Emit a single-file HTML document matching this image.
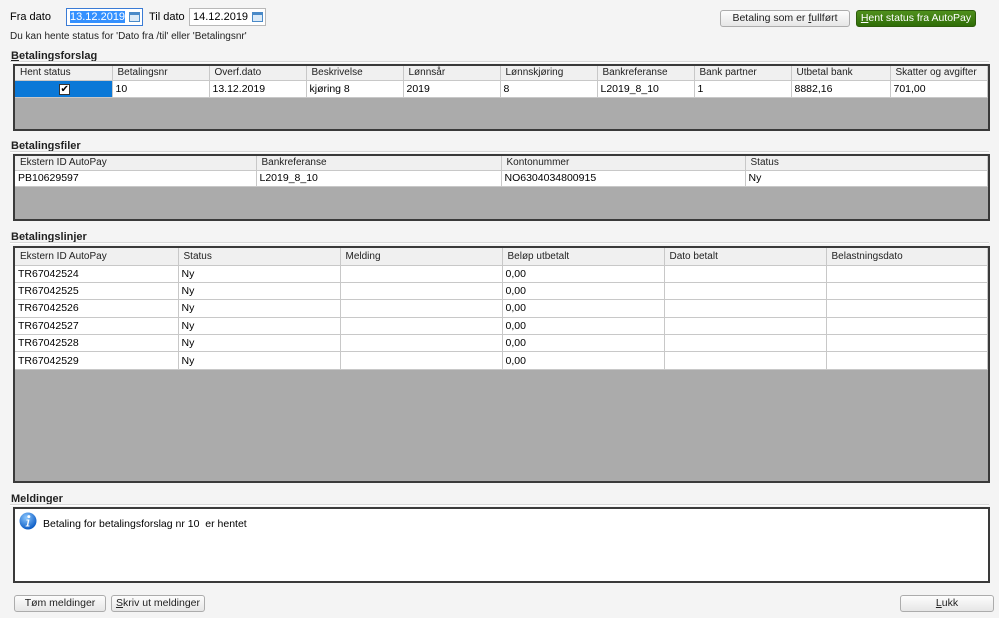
<!DOCTYPE html>
<html><head><meta charset="utf-8"><style>
*{box-sizing:border-box;margin:0;padding:0}
body{width:999px;height:618px;background:#f4f4f4;font-family:"Liberation Sans",Tahoma,sans-serif;font-size:11px;color:#000;position:relative;overflow:hidden}
.a{position:absolute;white-space:nowrap}
.lbl{font-weight:bold;font-size:11px;color:#222}
.sep{position:absolute;left:10px;right:10px;height:2px;border-top:1px solid #d8d8d8;border-bottom:1px solid #fff}
.box{position:absolute;left:13px;width:977px;border:2px solid #3a3a3a;background:#ababab;overflow:hidden}
table{border-collapse:collapse;table-layout:fixed;width:100%;background:#fff}
th{background:#f0f0f0;font-weight:normal;text-align:left;padding:0 0 0 5px;border-right:1px solid #c8c8c8;border-bottom:1px solid #c8c8c8;height:14px;font-size:10px;color:#222;overflow:hidden}
td{padding:0 0 0 3px;border-right:1px solid #c8c8c8;border-bottom:1px solid #c8c8c8;overflow:hidden;font-size:10.5px}
.btn{position:absolute;height:17px;border:1px solid #acacac;border-radius:3px;background:linear-gradient(#fdfdfd,#e6e6e6);text-align:center;line-height:15px;font-size:10.5px;color:#222;white-space:nowrap}
.inp{position:absolute;height:18px;border:1px solid #b8b8b8;background:#fff;font-size:11px;line-height:16px;padding-left:3px}
.cal{position:absolute;right:2px;top:3px;width:11px;height:10px;border:1px solid #4a8ac8;background:#dbeaf7}
.cal:before{content:"";position:absolute;left:0;right:0;top:0;height:2px;background:#4a8ac8}
</style></head><body>
<div class="a" style="left:10px;top:11px">Fra dato</div>
<div class="inp" style="left:66px;top:8px;width:77px;border-color:#3a7bd5"><span style="background:#3390ff;color:#fff">13.12.2019</span><div class="cal"></div></div>
<div class="a" style="left:149px;top:11px">Til dato</div>
<div class="inp" style="left:189px;top:8px;width:77px">14.12.2019<div class="cal"></div></div>
<div class="a" style="left:10px;top:31px;font-size:10px;color:#222">Du kan hente status for 'Dato fra /til' eller 'Betalingsnr'</div>
<div class="btn" style="left:720px;top:10px;width:130px">Betaling som er <u>f</u>ullført</div>
<div class="btn" style="left:856px;top:10px;width:120px;background:linear-gradient(#4f8f1d,#2f6d07);border-color:#2d5c0b;color:#fff"><u>H</u>ent status fra AutoPay</div>

<div class="a lbl" style="left:11px;top:50px"><u>B</u>etalingsforslag</div>
<div class="sep" style="top:61px"></div>
<div class="box" style="top:64px;height:67px">
<table><colgroup><col style="width:97px"><col style="width:97px"><col style="width:97px"><col style="width:97px"><col style="width:97px"><col style="width:97px"><col style="width:97px"><col style="width:97px"><col style="width:99px"><col></colgroup>
<tr><th>Hent status</th><th>Betalingsnr</th><th>Overf.dato</th><th>Beskrivelse</th><th>Lønnsår</th><th>Lønnskjøring</th><th>Bankreferanse</th><th>Bank partner</th><th>Utbetal bank</th><th>Skatter og avgifter</th></tr>
<tr style="height:17px"><td style="background:#0a78d7;text-align:center"><span style="display:inline-block;width:11px;height:11px;background:#fff;border:1px solid #333;font-size:10px;line-height:9px">✔</span></td><td>10</td><td>13.12.2019</td><td>kjøring 8</td><td>2019</td><td>8</td><td>L2019_8_10</td><td>1</td><td>8882,16</td><td>701,00</td></tr>
</table></div>

<div class="a lbl" style="left:11px;top:140px">Betalingsfiler</div>
<div class="sep" style="top:151px"></div>
<div class="box" style="top:154px;height:67px">
<table><colgroup><col style="width:241px"><col style="width:245px"><col style="width:244px"><col></colgroup>
<tr><th>Ekstern ID AutoPay</th><th>Bankreferanse</th><th>Kontonummer</th><th>Status</th></tr>
<tr style="height:16px"><td>PB10629597</td><td>L2019_8_10</td><td>NO6304034800915</td><td>Ny</td></tr>
</table></div>

<div class="a lbl" style="left:11px;top:231px">Betalingslinjer</div>
<div class="sep" style="top:242px"></div>
<div class="box" style="top:246px;height:237px">
<table><colgroup><col style="width:163px"><col style="width:162px"><col style="width:162px"><col style="width:162px"><col style="width:162px"><col></colgroup>
<tr style="height:17px"><th>Ekstern ID AutoPay</th><th>Status</th><th>Melding</th><th>Beløp utbetalt</th><th>Dato betalt</th><th>Belastningsdato</th></tr>
<tr style="height:17.4px"><td>TR67042524</td><td>Ny</td><td></td><td>0,00</td><td></td><td></td></tr>
<tr style="height:17.4px"><td>TR67042525</td><td>Ny</td><td></td><td>0,00</td><td></td><td></td></tr>
<tr style="height:17.4px"><td>TR67042526</td><td>Ny</td><td></td><td>0,00</td><td></td><td></td></tr>
<tr style="height:17.4px"><td>TR67042527</td><td>Ny</td><td></td><td>0,00</td><td></td><td></td></tr>
<tr style="height:17.4px"><td>TR67042528</td><td>Ny</td><td></td><td>0,00</td><td></td><td></td></tr>
<tr style="height:17.4px"><td>TR67042529</td><td>Ny</td><td></td><td>0,00</td><td></td><td></td></tr>
</table></div>

<div class="a lbl" style="left:11px;top:493px">Meldinger</div>
<div class="sep" style="top:504px"></div>
<div class="box" style="top:507px;height:76px;background:#fff">
<svg style="position:absolute;left:4px;top:3px" width="18" height="18" viewBox="0 0 18 18"><defs><radialGradient id="g" cx="40%" cy="30%" r="70%"><stop offset="0" stop-color="#8cc8ff"/><stop offset="1" stop-color="#0b5bc4"/></radialGradient></defs><circle cx="9" cy="9" r="8.5" fill="url(#g)"/><circle cx="9.8" cy="4.6" r="1.5" fill="#fff"/><path d="M7.5 7.5h3l-1.3 6h1.3v1h-4l.3-1h1l1-5h-1.5z" fill="#fff"/></svg>
<div class="a" style="left:28px;top:9px;font-size:10.5px">Betaling for betalingsforslag nr 10&nbsp; er hentet</div>
</div>

<div class="btn" style="left:14px;top:595px;width:92px">Tøm meldinger</div>
<div class="btn" style="left:111px;top:595px;width:94px"><u>S</u>kriv ut meldinger</div>
<div class="btn" style="left:900px;top:595px;width:94px"><u>L</u>ukk</div>
</body></html>
